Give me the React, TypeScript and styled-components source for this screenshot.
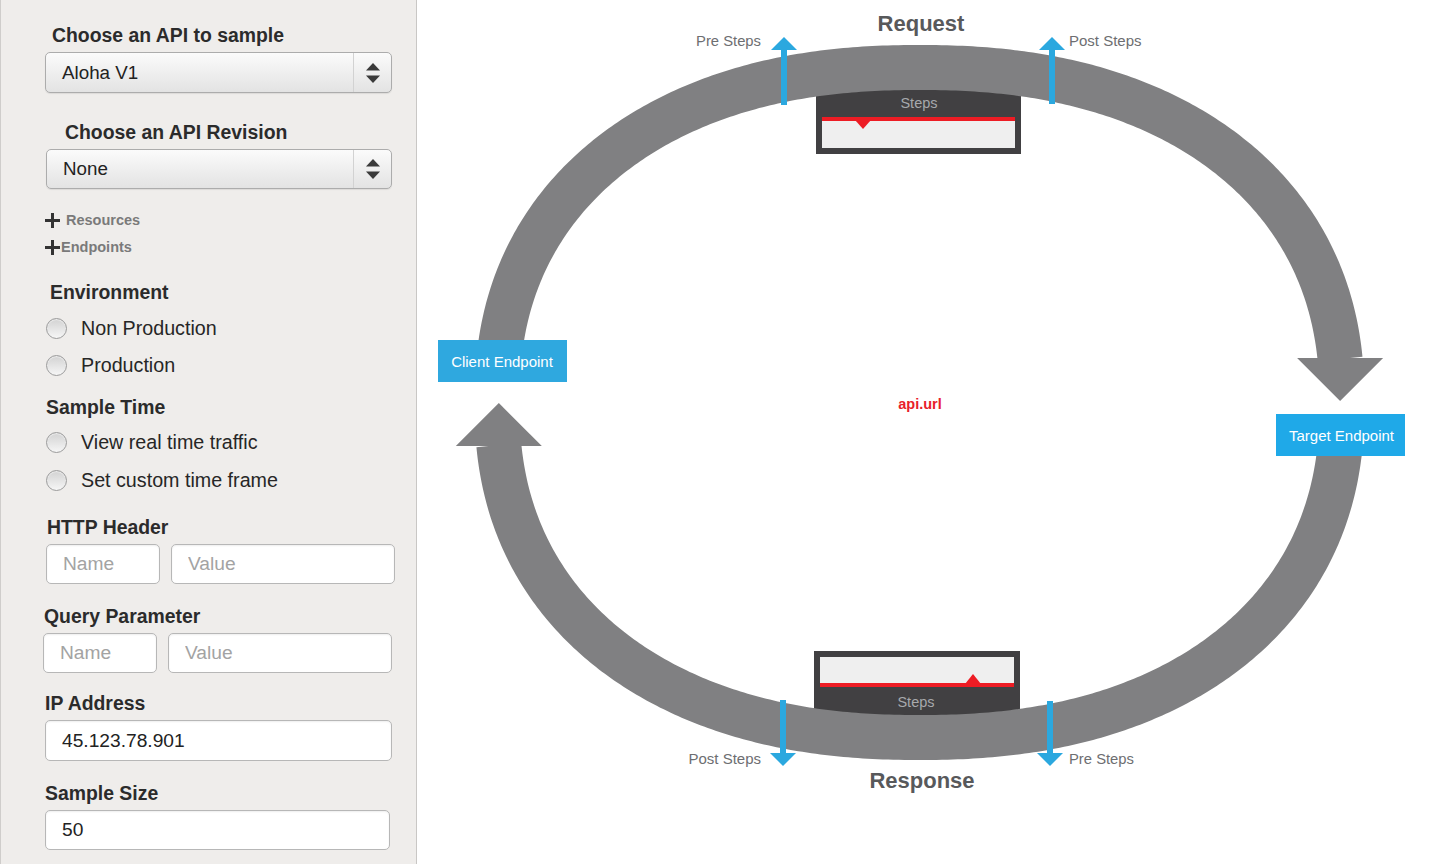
import React from "react";
import styled, { createGlobalStyle } from "styled-components";

const GlobalStyle = createGlobalStyle`
  html, body { margin: 0; padding: 0; background: #ffffff; }
  body { font-family: "Liberation Sans", Arial, Helvetica, sans-serif; }
  * { box-sizing: border-box; }
`;

const Page = styled.div`
  display: flex;
  width: 1436px;
  height: 864px;
  overflow: hidden;
`;

const Sidebar = styled.aside`
  width: 417px;
  flex: 0 0 417px;
  height: 100%;
  background: #efedeb;
  border-left: 1px solid #cfcdcb;
  border-right: 1px solid #c9c7c5;
  display: flex;
  flex-direction: column;
  align-items: flex-start;
`;

const Heading = styled.div<{ $mt: number; $ml: number }>`
  margin-top: ${(p) => p.$mt}px;
  margin-left: ${(p) => p.$ml - 1}px;
  font-size: 19.4px;
  line-height: 22px;
  font-weight: 700;
  color: #2b2b2b;
  white-space: nowrap;
`;

const SelectBox = styled.div<{ $mt: number; $ml: number; $w: number; $h: number }>`
  margin-top: ${(p) => p.$mt}px;
  margin-left: ${(p) => p.$ml - 1}px;
  width: ${(p) => p.$w}px;
  height: ${(p) => p.$h}px;
  display: flex;
  align-items: stretch;
  border: 1px solid #acacac;
  border-radius: 5px;
  background: linear-gradient(#fbfbfb, #e3e3e3);
  box-shadow: 0 1px 1px rgba(0, 0, 0, 0.08);
`;

const SelectValue = styled.div`
  flex: 1;
  display: flex;
  align-items: center;
  padding-left: 16px;
  font-size: 18.8px;
  color: #222;
`;

const SelectArrows = styled.div`
  width: 38px;
  border-left: 1px solid #d2d2d2;
  display: flex;
  align-items: center;
  justify-content: center;
`;

const Toggle = styled.div<{ $mt: number; $gap: number }>`
  margin-top: ${(p) => p.$mt}px;
  margin-left: 44px;
  height: 18px;
  display: flex;
  align-items: center;
  gap: ${(p) => p.$gap}px;
  font-size: 14.5px;
  font-weight: 700;
  color: #7a7a7a;
`;

const RadioRow = styled.label<{ $mt?: number; $h: number }>`
  margin-top: ${(p) => p.$mt ?? 0}px;
  margin-left: 45px;
  height: ${(p) => p.$h}px;
  display: flex;
  align-items: center;
  gap: 14px;
  font-size: 19.7px;
  color: #262626;
  white-space: nowrap;
`;

const RadioDot = styled.span`
  width: 21px;
  height: 21px;
  flex: 0 0 21px;
  border-radius: 50%;
  border: 1px solid #9b9b9b;
  background: linear-gradient(#d2d2d2, #f6f6f6);
  box-shadow: inset 0 1px 1px rgba(255, 255, 255, 0.6);
`;

const InputRow = styled.div<{ $mt: number; $ml: number }>`
  margin-top: ${(p) => p.$mt}px;
  margin-left: ${(p) => p.$ml - 1}px;
  display: flex;
  gap: 11px;
`;

const Field = styled.input<{ $w: number; $h: number }>`
  width: ${(p) => p.$w}px;
  height: ${(p) => p.$h}px;
  padding: 0 0 0 16px;
  margin: 0;
  border: 1px solid #b7b7b7;
  border-radius: 5px;
  background: #fff;
  box-shadow: inset 0 1px 2px rgba(0, 0, 0, 0.07);
  font-family: "Liberation Sans", Arial, sans-serif;
  font-size: 19.2px;
  color: #222;
  outline: none;
  &::placeholder {
    color: #a3a3a3;
  }
`;

const Canvas = styled.main`
  flex: 1;
  position: relative;
  background: #fff;
`;

const DiagramSvg = styled.svg`
  position: absolute;
  inset: 0;
  display: block;
  font-family: "Liberation Sans", Arial, sans-serif;
`;

const Updown = () => (
  <svg width="14" height="20" viewBox="0 0 14 20">
    <polygon points="0,7.5 7,0 14,7.5" fill="#3a3a3a" />
    <polygon points="0,12.5 14,12.5 7,20" fill="#3a3a3a" />
  </svg>
);

const Plus = () => (
  <svg width="15" height="15" viewBox="0 0 15 15">
    <rect x="0" y="6" width="15" height="3" fill="#333" />
    <rect x="6" y="0" width="3" height="15" fill="#333" />
  </svg>
);

/* ring geometry */
const N = 2.25;
const CX = 919.5;
const CY = 402.5;
const RX = 422.5;
const RY = 335;

const pt = (t: number): [number, number] => {
  const c = Math.cos(t);
  const s = Math.sin(t);
  const x = CX + RX * Math.sign(c) * Math.pow(Math.abs(c), 2 / N);
  const y = CY + RY * Math.sign(s) * Math.pow(Math.abs(s), 2 / N);
  return [x, y];
};
const tFor = (h: number) => Math.asin(Math.pow(Math.abs(h) / RY, N / 2));

const arc = (t0: number, t1: number) => {
  const steps = 300;
  let d = "";
  for (let i = 0; i <= steps; i++) {
    const [x, y] = pt(t0 + ((t1 - t0) * i) / steps);
    d += `${i === 0 ? "M" : "L"}${x.toFixed(2)} ${y.toFixed(2)} `;
  }
  return d;
};

const upperT0 = Math.PI + tFor(CY - 362);
const upperT1 = 2 * Math.PI - tFor(CY - 359);
const lowerT0 = tFor(440 - CY);
const lowerT1 = Math.PI - tFor(445 - CY);
const upperPath = arc(upperT0, upperT1);
const lowerPath = arc(lowerT0, lowerT1);
const rightEnd = pt(upperT1);
const leftEnd = pt(lowerT1);

const RING = "#808082";
const BLUE = "#2ba8df";

const Diagram = () => (
  <DiagramSvg width="1019" height="864" viewBox="417 0 1019 864">
    {/* request steps panel */}
    <rect x="816" y="86" width="205" height="68" fill="#414042" />
    <rect x="822" y="117" width="193" height="31" fill="#efefef" />
    <rect x="822" y="117" width="193" height="4" fill="#ed1c24" />
    <polygon points="855,120 871,120 863,129" fill="#ed1c24" />
    {/* response steps panel */}
    <rect x="814" y="651" width="206" height="72" fill="#414042" />
    <rect x="820" y="657" width="194" height="30" fill="#efefef" />
    <rect x="820" y="683" width="194" height="4" fill="#ed1c24" />
    <polygon points="965,684 981,684 973,674" fill="#ed1c24" />

    {/* ring */}
    <path d={upperPath} fill="none" stroke={RING} strokeWidth="45" />
    <path d={lowerPath} fill="none" stroke={RING} strokeWidth="45" />
    <polygon
      points={`${rightEnd[0] - 43},358 ${rightEnd[0] + 43},358 ${rightEnd[0]},401`}
      fill={RING}
    />
    <polygon
      points={`${leftEnd[0] - 43},446 ${leftEnd[0] + 43},446 ${leftEnd[0]},403`}
      fill={RING}
    />

    {/* steps labels */}
    <text x="919" y="108" textAnchor="middle" fontSize="14.5" fill="#a7a9ac">Steps</text>
    <text x="916" y="707" textAnchor="middle" fontSize="14.5" fill="#a7a9ac">Steps</text>

    {/* blue step arrows - request */}
    <rect x="781" y="49" width="6" height="56" fill={BLUE} />
    <polygon points="771,50 797,50 784,37" fill={BLUE} />
    <rect x="1049" y="49" width="6" height="55" fill={BLUE} />
    <polygon points="1039,50 1065,50 1052,37" fill={BLUE} />
    {/* blue step arrows - response */}
    <rect x="780" y="700" width="6" height="54" fill={BLUE} />
    <polygon points="770,753 796,753 783,766" fill={BLUE} />
    <rect x="1047" y="701" width="6" height="53" fill={BLUE} />
    <polygon points="1037,753 1063,753 1050,766" fill={BLUE} />

    {/* titles */}
    <text x="921" y="31" textAnchor="middle" fontSize="22" fontWeight="700" fill="#58595b">Request</text>
    <text x="922" y="788" textAnchor="middle" fontSize="22" fontWeight="700" fill="#58595b">Response</text>
    <text x="761" y="46" textAnchor="end" fontSize="14.8" fill="#6d6e71">Pre Steps</text>
    <text x="1069" y="46" fontSize="15" fill="#6d6e71">Post Steps</text>
    <text x="761" y="764" textAnchor="end" fontSize="15" fill="#6d6e71">Post Steps</text>
    <text x="1069" y="764" fontSize="14.8" fill="#6d6e71">Pre Steps</text>

    {/* endpoints */}
    <rect x="438" y="340" width="129" height="42" fill="#2fa8df" />
    <text x="502" y="366.5" textAnchor="middle" fontSize="15" fill="#ffffff">Client Endpoint</text>
    <rect x="1276" y="414" width="129" height="42" fill="#1fa9e8" />
    <text x="1341.5" y="440.5" textAnchor="middle" fontSize="15" fill="#ffffff">Target Endpoint</text>

    <text x="920" y="408.5" textAnchor="middle" fontSize="14.5" fontWeight="700" fill="#e8202a">api.url</text>
  </DiagramSvg>
);

export default function App() {
  return (
    <>
      <GlobalStyle />
      <Page>
        <Sidebar>
          <Heading $mt={24} $ml={52}>Choose an API to sample</Heading>
          <SelectBox $mt={6} $ml={45} $w={347} $h={41}>
            <SelectValue>Aloha V1</SelectValue>
            <SelectArrows><Updown /></SelectArrows>
          </SelectBox>

          <Heading $mt={28} $ml={65}>Choose an API Revision</Heading>
          <SelectBox $mt={6} $ml={46} $w={346} $h={40}>
            <SelectValue>None</SelectValue>
            <SelectArrows><Updown /></SelectArrows>
          </SelectBox>

          <Toggle $mt={22} $gap={6}><Plus />Resources</Toggle>
          <Toggle $mt={9} $gap={1}><Plus />Endpoints</Toggle>

          <Heading $mt={25} $ml={50}>Environment</Heading>
          <RadioRow $mt={7} $h={37}><RadioDot />Non Production</RadioRow>
          <RadioRow $h={37}><RadioDot />Production</RadioRow>

          <Heading $mt={12} $ml={46}>Sample Time</Heading>
          <RadioRow $mt={5} $h={38}><RadioDot />View real time traffic</RadioRow>
          <RadioRow $h={38}><RadioDot />Set custom time frame</RadioRow>

          <Heading $mt={17} $ml={47}>HTTP Header</Heading>
          <InputRow $mt={6} $ml={46}>
            <Field $w={114} $h={40} placeholder="Name" readOnly />
            <Field $w={224} $h={40} placeholder="Value" readOnly />
          </InputRow>

          <Heading $mt={21} $ml={44}>Query Parameter</Heading>
          <InputRow $mt={6} $ml={43}>
            <Field $w={114} $h={40} placeholder="Name" readOnly />
            <Field $w={224} $h={40} placeholder="Value" readOnly />
          </InputRow>

          <Heading $mt={19} $ml={45}>IP Address</Heading>
          <InputRow $mt={6} $ml={45}>
            <Field $w={347} $h={41} defaultValue="45.123.78.901" readOnly />
          </InputRow>

          <Heading $mt={21} $ml={45}>Sample Size</Heading>
          <InputRow $mt={6} $ml={45}>
            <Field $w={345} $h={40} defaultValue="50" readOnly />
          </InputRow>
        </Sidebar>
        <Canvas>
          <Diagram />
        </Canvas>
      </Page>
    </>
  );
}
